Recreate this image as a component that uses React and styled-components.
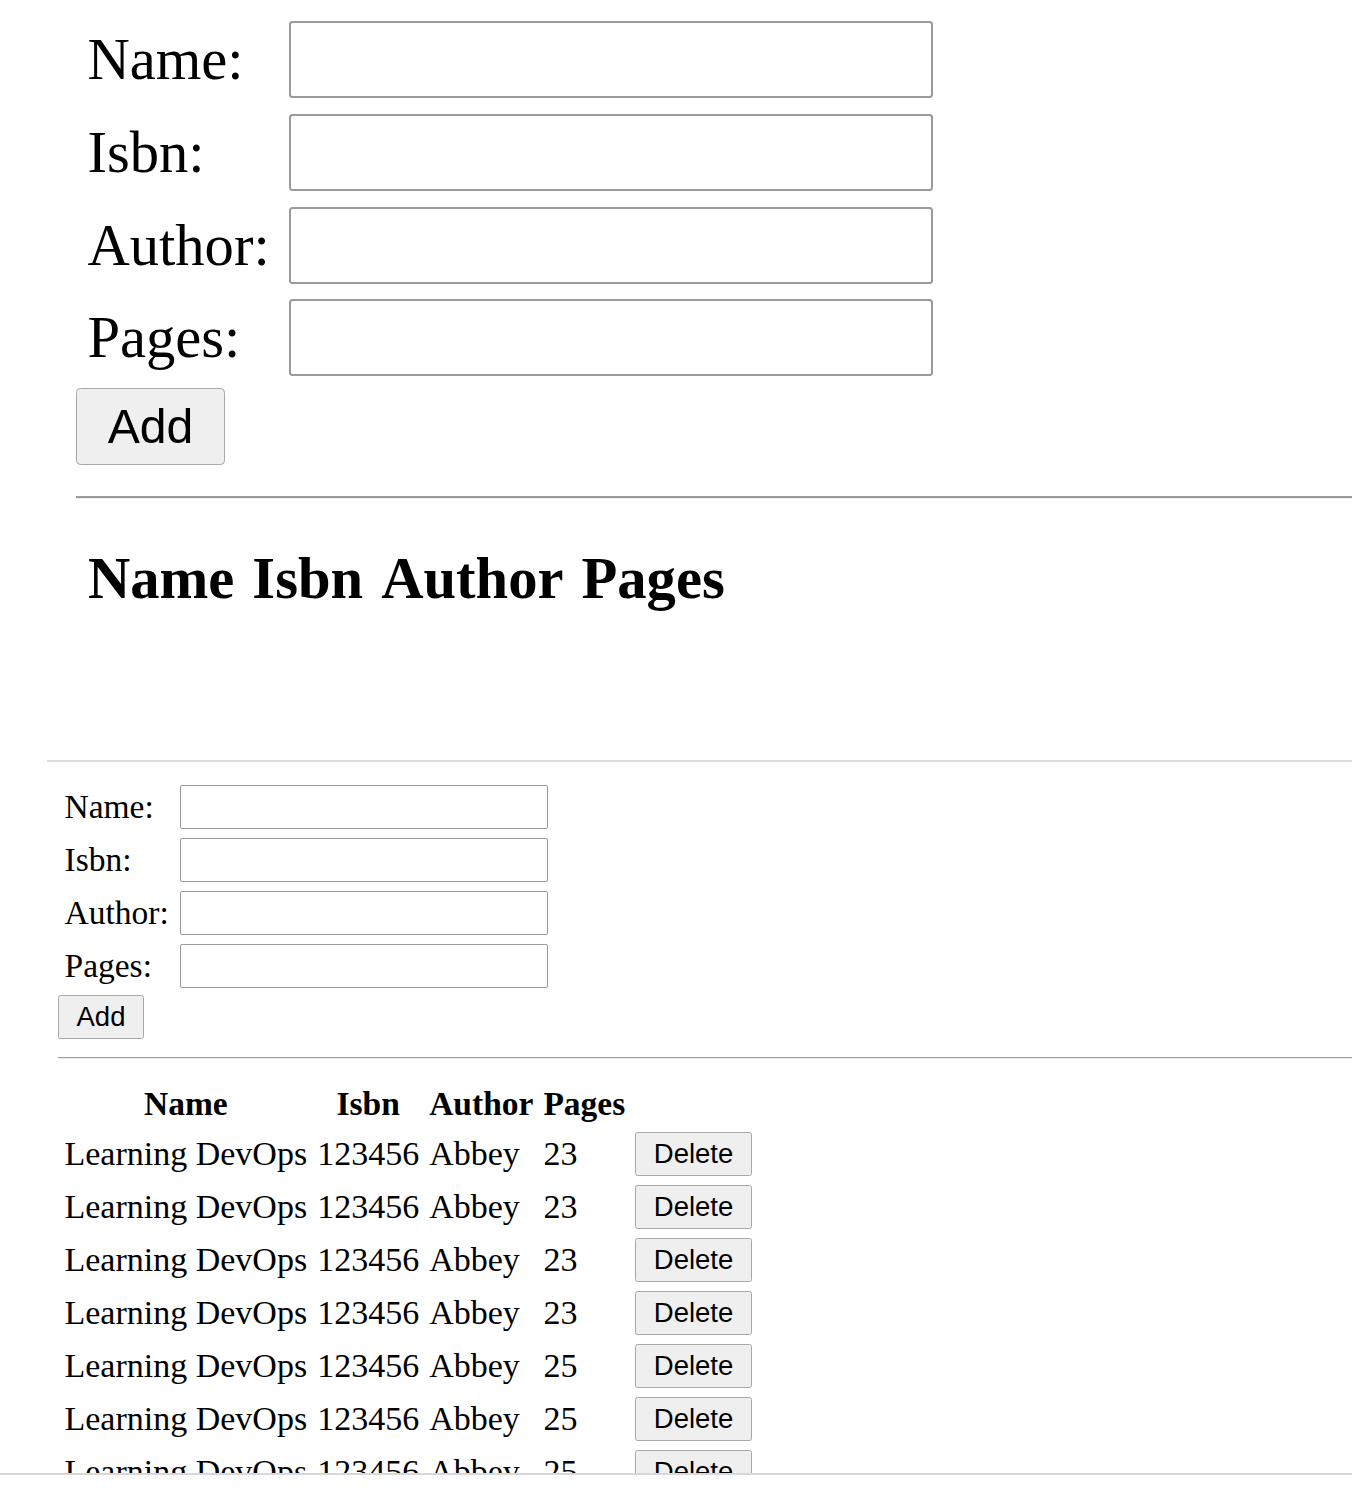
import React from "react";
import styled, { createGlobalStyle } from "styled-components";

const Global = createGlobalStyle`
  html, body { margin: 0; padding: 0; background: #fff; }
  body { font-family: "Liberation Serif", "Times New Roman", serif; color: #000; }
`;

const px = (n) => (p) => `${n * p.$s}px`;

const Page = styled.div`
  width: 1352px;
  height: 1500px;
  background: #fff;
  overflow: hidden;
`;

const TopShot = styled.div`
  height: 760px;
  overflow: hidden;
`;

const BottomShot = styled.div`
  margin-left: 47px;
  height: 711px;
  border-top: 2px solid #dcdce0;
  overflow: hidden;
`;

const BottomRule = styled.div`
  height: 2px;
  background: #d8d8dc;
`;

const Panel = styled.section`
  padding-top: ${(p) => p.$top}px;
  padding-left: ${(p) => p.$left}px;
`;

const FormGrid = styled.div`
  display: grid;
  grid-template-columns: ${px(115)} ${px(368)};
  row-gap: ${px(9)};
  padding-left: ${px(6.5)};
  align-items: center;
`;

const Label = styled.label`
  font-family: "Liberation Serif", "Times New Roman", serif;
  font-size: ${px(33.5)};
  line-height: normal;
  white-space: nowrap;
`;

const TextInput = styled.input`
  box-sizing: border-box;
  width: ${px(368)};
  height: ${px(44)};
  margin: 0;
  border: ${(p) => Math.max(1, 1.15 * p.$s)}px solid #9a9a9a;
  border-radius: ${px(2)};
  background: #fff;
  padding: 0 ${px(4)};
  font-size: ${px(20)};
`;

const Button = styled.button`
  box-sizing: border-box;
  height: ${px(44)};
  margin: 0;
  margin-top: ${(p) => (p.$gap || 0) * p.$s}px;
  padding: 0 ${px(17.5)};
  font-family: "Liberation Sans", Arial, sans-serif;
  font-size: ${px(27.5)};
  color: #000;
  background: #efefef;
  border: ${(p) => Math.max(1, 1.1 * p.$s)}px solid #a8a8a8;
  border-radius: ${px(2.5)};
  line-height: 1;
`;

const Rule = styled.hr`
  margin: ${px(18)} 0 0 0;
  height: 0;
  border: 0;
  border-top: ${px(1.6)} solid #9c9c9c;
  border-bottom: ${px(1)} solid #ececec;
`;

const Table = styled.table`
  margin-top: ${px(21)};
  border-collapse: separate;
  border-spacing: ${px(2.5)} ${px(2)};
  margin-left: ${px(0.5)};
`;

const HeadCell = styled.th`
  padding: ${px(3.5)} ${px(4)};
  font-family: "Liberation Serif", "Times New Roman", serif;
  font-weight: bold;
  font-size: ${px(33.5)};
  line-height: normal;
  text-align: center;
  white-space: nowrap;
`;

const Cell = styled.td`
  padding: ${px(3.5)} ${px(4)};
  font-family: "Liberation Serif", "Times New Roman", serif;
  font-size: ${px(34)};
  line-height: normal;
  text-align: left;
  vertical-align: middle;
  white-space: nowrap;
`;

const fields = ["Name:", "Isbn:", "Author:", "Pages:"];
const columns = ["Name", "Isbn", "Author", "Pages"];

const books = [23, 23, 23, 23, 25, 25, 25, 25].map((pages, i) => ({
  id: i,
  name: "Learning DevOps",
  isbn: "123456",
  author: "Abbey",
  pages,
}));

function BookPanel({ s, top, left, rows }) {
  return (
    <Panel $top={top} $left={left}>
      <FormGrid $s={s}>
        {fields.map((f) => (
          <React.Fragment key={f}>
            <Label $s={s}>{f}</Label>
            <TextInput $s={s} type="text" />
          </React.Fragment>
        ))}
      </FormGrid>
      <Button $s={s} $gap={6.5}>Add</Button>
      <Rule $s={s} />
      <Table $s={s}>
        <thead>
          <tr>
            {columns.map((c) => (
              <HeadCell key={c} $s={s}>{c}</HeadCell>
            ))}
          </tr>
        </thead>
        <tbody>
          {rows.map((b) => (
            <tr key={b.id}>
              <Cell $s={s}>{b.name}</Cell>
              <Cell $s={s}>{b.isbn}</Cell>
              <Cell $s={s}>{b.author}</Cell>
              <Cell $s={s}>{b.pages}</Cell>
              <Cell $s={s}>
                <Button $s={s}>Delete</Button>
              </Cell>
            </tr>
          ))}
        </tbody>
      </Table>
    </Panel>
  );
}

export default function App() {
  return (
    <Page>
      <Global />
      <TopShot>
        <BookPanel s={1.75} top={21} left={76} rows={[]} />
      </TopShot>
      <BottomShot>
        <BookPanel s={1} top={23} left={11} rows={books} />
      </BottomShot>
      <BottomRule />
    </Page>
  );
}
